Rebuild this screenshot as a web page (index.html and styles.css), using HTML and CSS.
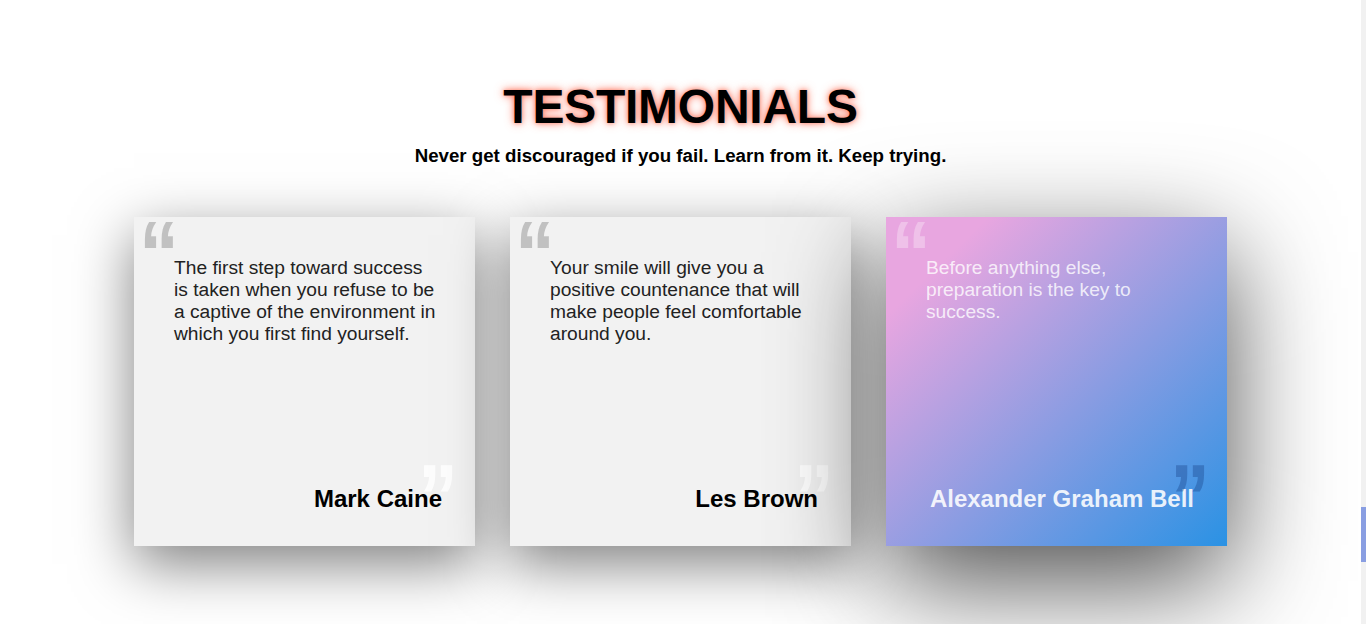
FILE: index.html
```html
<!DOCTYPE html>
<html lang="en">
<head>
<meta charset="utf-8">
<title>Testimonials</title>
<link rel="stylesheet" href="styles.css">
</head>
<body>
<div class="window">
  <main class="page">
    <section class="testimonials" id="testimonials">
      <h2 class="title">TESTIMONIALS</h2>
      <p class="subtitle">Never get discouraged if you fail. Learn from it. Keep trying.</p>
      <div class="cards">
        <article class="card">
          <span class="quote-open">&ldquo;</span>
          <p class="card-text">The first step toward success is taken when you refuse to be a captive of the environment in which you first find yourself.</p>
          <h3 class="card-name">Mark Caine</h3>
          <span class="quote-close">&rdquo;</span>
        </article>
        <article class="card">
          <span class="quote-open">&ldquo;</span>
          <p class="card-text">Your smile will give you a positive countenance that will make people feel comfortable around you.</p>
          <h3 class="card-name">Les Brown</h3>
          <span class="quote-close">&rdquo;</span>
        </article>
        <article class="card card-active">
          <span class="quote-open">&ldquo;</span>
          <p class="card-text">Before anything else, preparation is the key to success.</p>
          <h3 class="card-name">Alexander Graham Bell</h3>
          <span class="quote-close">&rdquo;</span>
        </article>
      </div>
    </section>
  </main>
  <div class="scrollbar" aria-hidden="true"><div class="scrollbar-thumb"></div></div>
</div>
</body>
</html>
```

FILE: styles.css
```css
html,
body {
  margin: 0;
  height: 100%;
  overflow: hidden;
}

body {
  background: #ffffff;
  font-family: "Liberation Sans", Arial, sans-serif;
  color: #000;
}

.window {
  display: flex;
  height: 624px;
}

.page {
  flex: 1;
  min-width: 0;
  overflow: hidden;
}

.scrollbar {
  width: 5px;
  flex: none;
  background: #f1f1f1;
}

.scrollbar-thumb {
  margin-top: 507px;
  height: 55px;
  background: #899ee2;
}

.testimonials {
  height: 624px;
  box-sizing: border-box;
  padding-top: 79px;
  display: flex;
  flex-direction: column;
  align-items: center;
}

.title {
  margin: 0;
  font-size: 48px;
  line-height: 56px;
  font-weight: 700;
  letter-spacing: -0.25px;
  color: #000;
  text-shadow: 0 0 10px rgba(255, 90, 60, 0.75), 0 0 4px rgba(255, 140, 120, 0.8);
}

.subtitle {
  margin: 10px 0 0;
  font-size: 18.7px;
  line-height: 21.5px;
  font-weight: 700;
}

.cards {
  margin-top: 50px;
  display: flex;
  gap: 35px;
}

.card {
  position: relative;
  width: 341px;
  height: 329px;
  box-sizing: border-box;
  padding: 40px 35px 33px 40px;
  background: #f2f2f2;
  box-shadow: 0 18px 55px rgba(0, 0, 0, 0.5);
  display: flex;
  flex-direction: column;
}

.card-text {
  margin: 0;
  flex: 1;
  font-size: 19.2px;
  line-height: 22px;
  color: #222;
}

.card-name {
  margin: 0 -2px 0 0;
  text-align: right;
  font-size: 24px;
  line-height: 28px;
  font-weight: 700;
  color: #000;
}

.quote-open,
.quote-close {
  position: absolute;
  font-family: "Liberation Sans", Arial, sans-serif;
  font-weight: 700;
  font-size: 80px;
  line-height: 80px;
  transform: scaleY(1.15);
  transform-origin: top;
}

.quote-open {
  left: 5px;
  top: -8px;
  color: rgba(0, 0, 0, 0.2);
}

.quote-close {
  right: 17px;
  top: 235px;
  color: rgba(255, 255, 255, 0.85);
}

.card-active {
  background: linear-gradient(to bottom right, #e8a6e0 15%, #2a92e4 100%);
  box-shadow: 0 35px 110px rgba(0, 0, 0, 0.7);
}

.card-active .card-text {
  color: rgba(255, 255, 255, 0.8);
}

.card-active .card-name {
  color: rgba(255, 255, 255, 0.88);
}

.card-active .quote-open {
  color: rgba(255, 255, 255, 0.3);
}

.card-active .quote-close {
  color: rgba(20, 60, 130, 0.35);
}
```
